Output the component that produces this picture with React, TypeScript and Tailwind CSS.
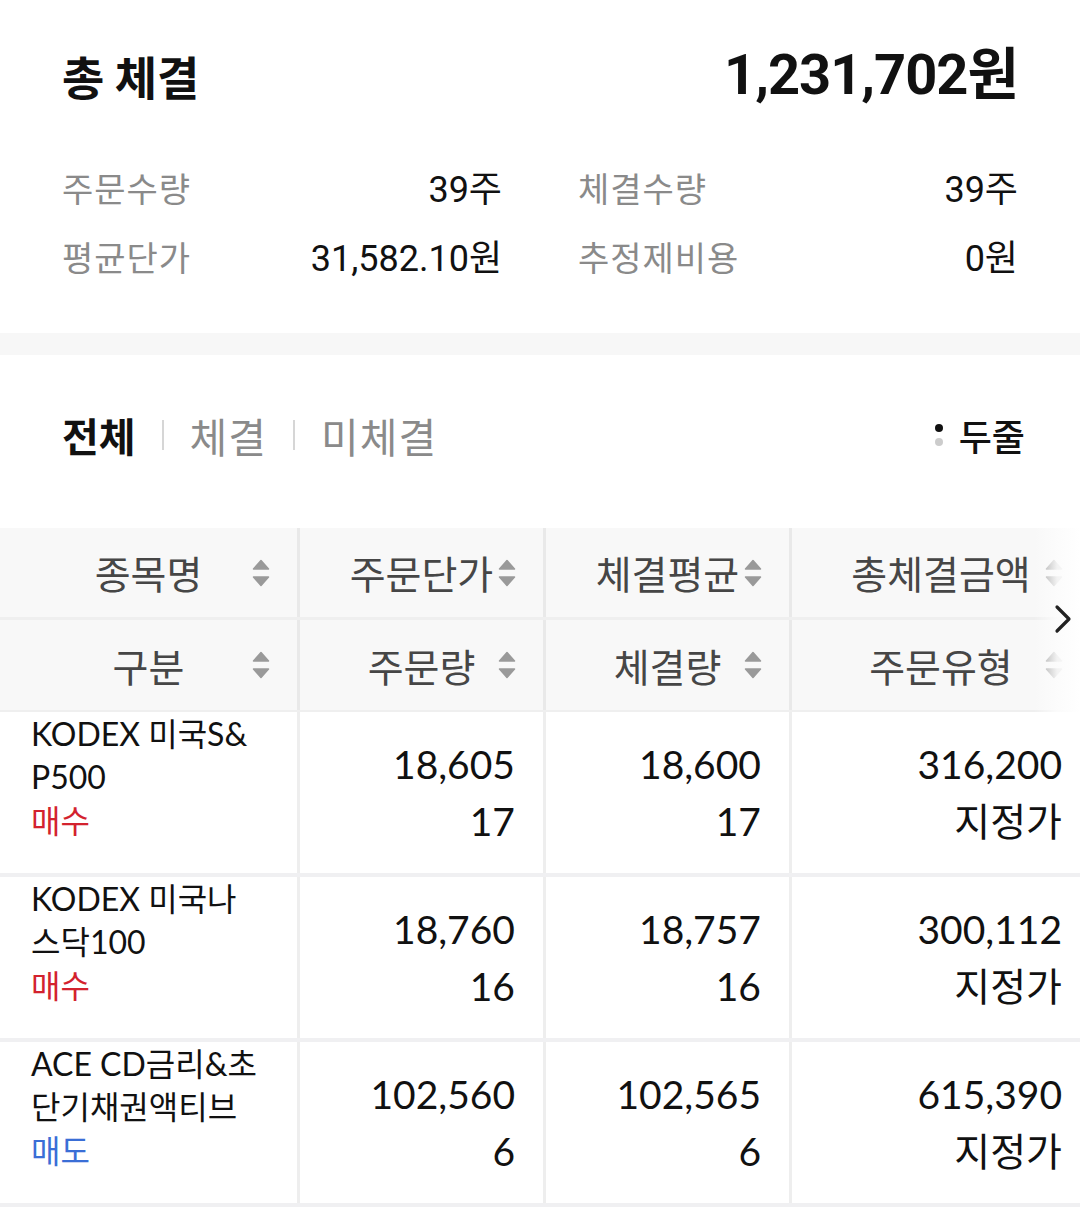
import React from "react";

const SortIcon = () => (
  <svg width="18" height="28" viewBox="0 0 18 28" className="block">
    <path d="M1.5 10 L9 1.5 L16.5 10 Z" fill="#9a9a9a" stroke="#9a9a9a" strokeWidth="1.5" strokeLinejoin="round" />
    <path d="M1.5 18 L9 26.5 L16.5 18 Z" fill="#9a9a9a" stroke="#9a9a9a" strokeWidth="1.5" strokeLinejoin="round" />
  </svg>
);

const HeadCell = ({ label, w, last }: { label: string; w: string; last?: boolean }) => (
  <div className={`relative flex h-full items-center justify-center ${w} ${last ? "" : "border-r-[3px] border-[#e9e9e9]"}`}>
    <span className="text-[39px] leading-none text-[#464646]" style={{ fontFamily: '"Noto Sans CJK KR", sans-serif' }}>
      {label}
    </span>
    <div className="absolute right-[27px] top-1/2 -translate-y-1/2">
      <SortIcon />
    </div>
  </div>
);

type Row = { name: string[]; side: string; buy: boolean; price: string; qty: string; avg: string; fqty: string; total: string; type: string };

const rows: Row[] = [
  { name: ["KODEX 미국S&", "P500"], side: "매수", buy: true, price: "18,605", qty: "17", avg: "18,600", fqty: "17", total: "316,200", type: "지정가" },
  { name: ["KODEX 미국나", "스닥100"], side: "매수", buy: true, price: "18,760", qty: "16", avg: "18,757", fqty: "16", total: "300,112", type: "지정가" },
  { name: ["ACE CD금리&초", "단기채권액티브"], side: "매도", buy: false, price: "102,560", qty: "6", avg: "102,565", fqty: "6", total: "615,390", type: "지정가" },
];

const NumCell = ({ a, b, w, last }: { a: string; b: string; w: string; last?: boolean }) => (
  <div className={`flex h-full flex-col items-end justify-center pr-[28px] ${w} ${last ? "" : "border-r-[3px] border-[#eeeeee]"}`}>
    <div className="text-[39px] leading-[57px] text-[#111111]">{a}</div>
    <div className="text-[39px] leading-[57px] text-[#111111]">{b}</div>
  </div>
);

export default function App() {
  return (
    <div className="w-[1080px] h-[1214px] overflow-hidden bg-white" style={{ fontFamily: 'Roboto, "Noto Sans CJK KR", sans-serif' }}>
      {/* Summary */}
      <section className="px-[62px] pt-[44px] pb-[54px]">
        <div className="flex h-[62px] items-center justify-between">
          <div className="text-[46px] font-bold leading-none text-[#111111]" style={{ fontFamily: '"Noto Sans CJK KR", sans-serif' }}>
            총 체결
          </div>
          <div className="text-[56px] font-bold leading-none tracking-[-1px] text-[#111111]">
            1,231,702원
          </div>
        </div>
        <div className="mt-[64px] grid grid-cols-2 gap-x-[76px] gap-y-[29px]">
          {[
            ["주문수량", "39주"],
            ["체결수량", "39주"],
            ["평균단가", "31,582.10원"],
            ["추정제비용", "0원"],
          ].map(([k, v]) => (
            <div key={k} className="flex h-[40px] items-center justify-between">
              <span className="text-[34px] leading-none tracking-[1px] text-[#8a8a8a]">{k}</span>
              <span className="text-[36px] leading-none text-[#111111]">{v}</span>
            </div>
          ))}
        </div>
      </section>

      <div className="h-[22px] bg-[#f7f7f7]" />

      {/* Tabs */}
      <section className="flex h-[173px] items-center justify-between pl-[62px] pr-[55px] pb-[13px]" style={{ fontFamily: '"Noto Sans CJK KR", sans-serif' }}>
        <div className="flex items-center">
          <span className="text-[40px] font-bold leading-none text-[#111111]">전체</span>
          <span className="mx-[26px] h-[30px] w-[2px] bg-[#d6d6d6]" />
          <span className="text-[41px] leading-none tracking-[1px] text-[#8a8a8a]">체결</span>
          <span className="mx-[26px] h-[30px] w-[2px] bg-[#d6d6d6]" />
          <span className="text-[41px] leading-none tracking-[1px] text-[#8a8a8a]">미체결</span>
        </div>
        <div className="flex items-center gap-[16px]">
          <div className="flex flex-col gap-[6px]">
            <span className="block h-[8px] w-[8px] rounded-full bg-[#111111]" />
            <span className="block h-[8px] w-[8px] rounded-full bg-[#cccccc]" />
          </div>
          <span className="text-[36px] font-medium leading-none text-[#111111]">두줄</span>
        </div>
      </section>

      {/* Table */}
      <div className="relative w-[1080px] overflow-hidden">
        <div className="w-[1090px]">
          <div className="bg-[#f8f8f8]">
            <div className="flex h-[92px] border-b-[3px] border-[#efefef]">
              <HeadCell label="종목명" w="w-[300px]" />
              <HeadCell label="주문단가" w="w-[246px]" />
              <HeadCell label="체결평균" w="w-[246px]" />
              <HeadCell label="총체결금액" w="w-[298px]" last />
            </div>
            <div className="flex h-[92px] border-b-[2px] border-[#efefef]">
              <HeadCell label="구분" w="w-[300px]" />
              <HeadCell label="주문량" w="w-[246px]" />
              <HeadCell label="체결량" w="w-[246px]" />
              <HeadCell label="주문유형" w="w-[298px]" last />
            </div>
          </div>
          <div style={{ fontFamily: 'Lato, "Noto Sans CJK KR", sans-serif' }}>
            {rows.map((r) => (
              <div key={r.price} className="flex h-[165px] border-b-[4px] border-[#f0f0f2]">
                <div className="flex h-full w-[300px] flex-col border-r-[3px] border-[#eeeeee] pl-[31px]">
                  {r.name.map((n) => (
                    <div key={n} className="whitespace-nowrap text-[32px] leading-[43px] text-[#111111]">{n}</div>
                  ))}
                  <div className={`text-[32px] leading-[45px] ${r.buy ? "text-[#d3222e]" : "text-[#3a6ed6]"}`}>{r.side}</div>
                </div>
                <NumCell a={r.price} b={r.qty} w="w-[246px]" />
                <NumCell a={r.avg} b={r.fqty} w="w-[246px]" />
                <NumCell a={r.total} b={r.type} w="w-[298px]" last />
              </div>
            ))}
          </div>
        </div>
        {/* fade + chevron over header */}
        <div className="pointer-events-none absolute right-0 top-0 h-[184px] w-[46px] bg-linear-to-r from-[#f8f8f8]/0 via-[#fcfcfc]/90 to-[#ffffff]" />
        <div className="absolute right-[7px] top-[76px]">
          <svg width="20" height="30" viewBox="0 0 20 30">
            <polyline points="4,3 16,15 4,27" fill="none" stroke="#222222" strokeWidth="3.2" strokeLinecap="round" strokeLinejoin="round" />
          </svg>
        </div>
      </div>
    </div>
  );
}
